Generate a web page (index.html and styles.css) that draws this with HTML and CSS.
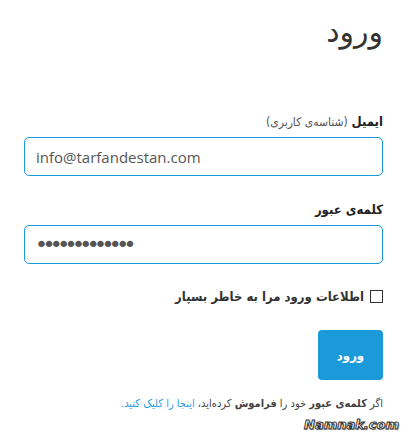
FILE: index.html
```html
<!DOCTYPE html>
<html lang="fa" dir="rtl">
<head>
    <meta charset="UTF-8">
    <meta name="viewport" content="width=device-width, initial-scale=1.0">
    <title>ورود</title>
    <link rel="stylesheet" href="styles.css">
</head>
<body>
    <div class="login">
        <h1>ورود</h1>

        <form class="login-form">
            <label class="field-label" for="user-email"><b>ایمیل</b> <span class="hint">(شناسه‌ی کاربری)</span></label>
            <input type="text" id="user-email" class="field" dir="ltr" value="info@tarfandestan.com">

            <label class="field-label" for="user-pass"><b>کلمه‌ی عبور</b></label>
            <input type="password" id="user-pass" class="field" dir="ltr" value="tarfandestan1">

            <label class="remember">
                <span class="check-box"></span>
                <span>اطلاعات ورود مرا به خاطر بسپار</span>
            </label>

            <button type="button" class="button">ورود</button>
        </form>

        <p class="forgot">اگر <b>کلمه‌ی عبور</b> خود را <b>فراموش</b> کرده‌اید، <a href="#">اینجا را کلیک کنید.</a></p>
    </div>

    <div class="watermark" dir="ltr">Namnak.com</div>
</body>
</html>
```

FILE: styles.css
```css
body {
    margin: 0;
    font-family: "DejaVu Sans Condensed", "DejaVu Sans", sans-serif;
    color: #333;
    background: #fff;
}
.login {
    padding: 10px 34px 0 24px;
}
h1 {
    margin: 0;
    font-family: "DejaVu Sans", sans-serif;
    font-size: 30px;
    font-weight: normal;
    line-height: 44px;
    color: #333;
}
.login-form {
    display: flex;
    flex-direction: column;
    padding-top: 59px;
}
.field-label {
    font-size: 13px;
    line-height: 18px;
    margin-bottom: 6px;
    color: #222;
}
.hint {
    color: #555;
    font-size: 12px;
}
.field {
    box-sizing: border-box;
    height: 39px;
    width: 100%;
    border: 1px solid #1d9ad8;
    border-radius: 5px;
    padding: 0 11px;
    font-family: "Open Sans", sans-serif;
    font-size: 15px;
    color: #555;
    margin-bottom: 25px;
    outline: none;
}
input[type="password"].field {
    font-family: "DejaVu Sans", sans-serif;
    font-size: 22px;
    letter-spacing: -5.6px;
    padding-left: 10px;
}
.remember {
    display: flex;
    align-items: center;
    gap: 6px;
    font-size: 13px;
    font-weight: bold;
    color: #333;
}
.check-box {
    width: 11px;
    height: 11px;
    border: 1px solid #333;
    background: #fff;
}
.button {
    align-self: flex-start;
    margin-top: 26px;
    width: 65px;
    height: 50px;
    border: none;
    border-radius: 4px;
    background-color: #1a9ad9;
    color: #fff;
    font-family: "DejaVu Sans Condensed", "DejaVu Sans", sans-serif;
    font-size: 13px;
    font-weight: bold;
}
.forgot {
    margin: 17px 0 0;
    font-size: 11px;
    color: #444;
}
.forgot a {
    color: #2b9be0;
    text-decoration: none;
}
.watermark {
    position: absolute;
    left: 304px;
    top: 417px;
    font-family: "DejaVu Sans", sans-serif;
    font-size: 13px;
    font-style: italic;
    font-weight: bold;
    color: #fff;
    -webkit-text-stroke: 1px #333;
    text-shadow: 1px 1px 1px #999;
}
```
